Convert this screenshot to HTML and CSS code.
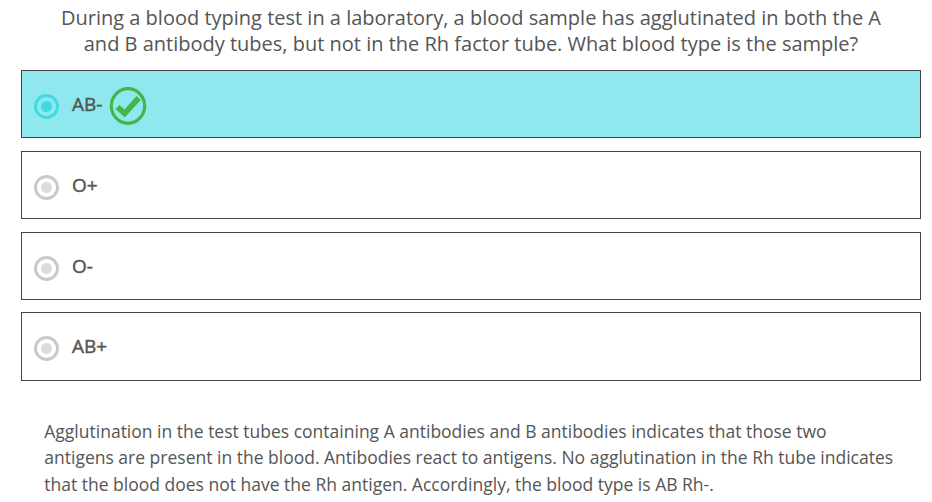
FILE: index.html
```html
<!DOCTYPE html>
<html lang="en">
<head>
    <meta charset="UTF-8">
    <meta name="viewport" content="width=device-width, initial-scale=1.0">
    <title>Blood Typing Quiz</title>
    <link rel="stylesheet" href="styles.css">
</head>
<body>
    <main class="quiz">
        <h1 class="question">During a blood typing test in a laboratory, a blood sample has agglutinated in both the A<br>and B antibody tubes, but not in the Rh factor tube. What blood type is the sample?</h1>

        <div class="answers">
            <div class="answer correct">
                <span class="radio"></span>
                <span class="label">AB-</span>
                <svg class="check" width="38" height="38" viewBox="0 0 38 38">
                    <ellipse cx="19" cy="19" rx="16.7" ry="17.3" fill="none" stroke="#43b649" stroke-width="3.2"/>
                    <path d="M6.5 22l4-4 5 4.5 12-13.5 4.3 4-16 17.5z" fill="#43b649"/>
                </svg>
            </div>
            <div class="answer">
                <span class="radio"></span>
                <span class="label">O+</span>
            </div>
            <div class="answer">
                <span class="radio"></span>
                <span class="label">O-</span>
            </div>
            <div class="answer">
                <span class="radio"></span>
                <span class="label">AB+</span>
            </div>
        </div>

        <p class="explanation">Agglutination in the test tubes containing A antibodies and B antibodies indicates that those two<br>antigens are present in the blood. Antibodies react to antigens. No agglutination in the Rh tube indicates<br>that the blood does not have the Rh antigen. Accordingly, the blood type is AB Rh-.</p>
    </main>
</body>
</html>
```

FILE: styles.css
```css
:root {
    --text-color: #555;
    --border-color: #444;
    --correct-bg: #8ee8ee;
    --correct-color: #3fdbe4;
    --radio-color: #c9c9c9;
}

* {
    box-sizing: border-box;
}

body {
    margin: 0;
    font-family: 'Open Sans', sans-serif;
    color: var(--text-color);
    background-color: #fff;
    overflow: hidden;
}

.quiz {
    padding: 5px 11px 0 21px;
}

.question {
    margin: 0;
    font-size: 20px;
    font-weight: 400;
    line-height: 26px;
    text-align: center;
    white-space: nowrap;
}

.answers {
    display: grid;
    gap: 12.6px;
    margin-top: 13px;
}

.answer {
    display: flex;
    align-items: center;
    height: 68.2px;
    padding-left: 12px;
    border: 1px solid var(--border-color);
}

.answer.correct {
    background-color: var(--correct-bg);
}

.radio {
    width: 25px;
    height: 25px;
    margin: 5px 13px 0 0;
    border: 3px solid var(--radio-color);
    border-radius: 50%;
    background: radial-gradient(circle, #dcdcdc 5px, transparent 6px);
}

.correct .radio {
    border-color: var(--correct-color);
    background: radial-gradient(circle, var(--correct-color) 5px, transparent 6px);
}

.label {
    font-size: 19px;
    line-height: 26px;
    -webkit-text-stroke: 0.45px var(--text-color);
}

.correct .label {
    padding-bottom: 1px;
}

.check {
    margin: 4px 0 0 6.2px;
}

.explanation {
    margin: 37.4px 0 0 23.3px;
    font-size: 17.5px;
    line-height: 26.4px;
    white-space: nowrap;
}
```
